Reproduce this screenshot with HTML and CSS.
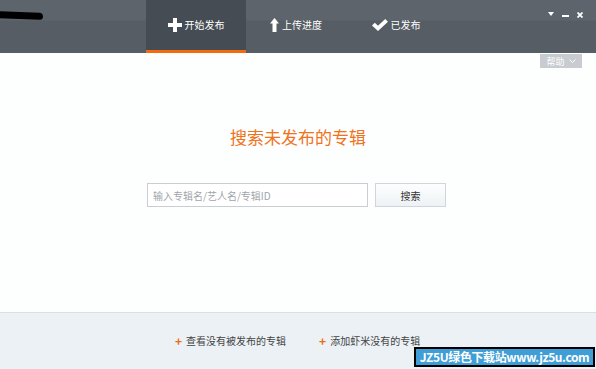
FILE: index.html
```html
<!DOCTYPE html>
<html>
<head>
	<title>发布专辑</title>
	<link rel="stylesheet" href="styles.css">
</head>
<body>
	<div class="app">
		<div class="header">
			<div class="logo"></div>
			<div class="tabs">
				<div class="tab is-active">
					<svg width="14" height="14" viewBox="0 0 14 14"><path d="M5 0h4v5h5v4H9v5H5V9H0V5h5z" fill="#fff"/></svg>
					<span>开始发布</span>
				</div>
				<div class="tab">
					<svg width="9" height="14" viewBox="0 0 9 14"><path d="M4.5 0L9 5.5H6.5V14h-4V5.5H0z" fill="#fff"/></svg>
					<span>上传进度</span>
				</div>
				<div class="tab">
					<svg width="16" height="12" viewBox="0 0 16 12"><path d="M0 6.5l2.8-2.8 3.2 3L13.2 0 16 2.8 6 12z" fill="#fff"/></svg>
					<span>已发布</span>
				</div>
			</div>
			<div class="controls">
				<svg class="ctl-menu" width="6" height="4" viewBox="0 0 6 4"><path d="M0 0h6L3 4z" fill="#fff"/></svg>
				<svg class="ctl-min" width="7" height="3" viewBox="0 0 7 3"><rect width="7" height="2" y="1" fill="#fff"/></svg>
				<svg class="ctl-close" width="6" height="6" viewBox="0 0 6 6"><path d="M0.5 0.5l5 5M5.5 0.5l-5 5" stroke="#fff" stroke-width="1.8"/></svg>
			</div>
		</div>

		<div class="main">
			<div class="helpbar">
				<div class="help">帮助 <svg width="7" height="5" viewBox="0 0 7 5"><path d="M0.5 0.5L3.5 3.5L6.5 0.5" stroke="#fff" fill="none"/></svg></div>
			</div>
			<h1 class="title">搜索未发布的专辑</h1>
			<form class="search">
				<input type="text" placeholder="输入专辑名/艺人名/专辑ID">
				<button type="button">搜索</button>
			</form>
		</div>

		<div class="footer">
			<a class="link"><span class="plus">+</span>查看没有被发布的专辑</a>
			<a class="link"><span class="plus">+</span>添加虾米没有的专辑</a>
			<div class="mark">JZ5U绿色下载站www.jz5u.com</div>
		</div>
	</div>
</body>
</html>
```

FILE: styles.css
```css
body {
	margin: 0;
	font-family: "Noto Sans CJK SC", "Liberation Sans", sans-serif;
	font-size: 10px;
	background: #fff;
}

.app {
	width: 596px;
	height: 369px;
	display: flex;
	flex-direction: column;
	overflow: hidden;
}

.header {
	height: 53px;
	flex: none;
	background: linear-gradient(#5d646b 0, #5d646b 20px, #565d64 21px, #565d64 100%);
	display: flex;
	position: relative;
}

.logo {
	position: absolute;
	left: -2px;
	top: 12px;
	width: 45px;
	height: 7px;
	background: #000;
	border-radius: 0 5px 4px 0;
	transform: rotate(2deg);
}

.tabs {
	display: flex;
	margin-left: 146px;
}

.tab {
	width: 100px;
	height: 50px;
	display: flex;
	align-items: center;
	justify-content: center;
	gap: 3px;
	color: #fff;
	font-size: 10px;
	border-bottom: 3px solid transparent;
}

.tab span {
	line-height: 1;
}

.tab.is-active {
	background: #464c53;
	border-bottom-color: #f26b0f;
}

.controls {
	margin-left: auto;
	margin-right: 13px;
	margin-top: 12px;
	display: flex;
	align-items: flex-start;
	height: 6px;
}

.ctl-min {
	margin-left: 8px;
	margin-top: 2px;
}

.ctl-close {
	margin-left: 8px;
}

.main {
	flex: 1;
	background: #fdfefe;
	display: flex;
	flex-direction: column;
	align-items: center;
}

.helpbar {
	align-self: stretch;
	display: flex;
	justify-content: flex-end;
	padding-right: 14px;
	padding-top: 1px;
}

.help {
	background: #c8ccd0;
	color: #fff;
	font-size: 9px;
	height: 14px;
	width: 42px;
	display: flex;
	align-items: center;
	justify-content: center;
	gap: 4px;
}

.title {
	margin: 57px 0 0;
	font-size: 17px;
	font-weight: normal;
	color: #f0731c;
	line-height: 24px;
}

.search {
	margin-top: 34px;
	margin-right: 3px;
	display: flex;
	gap: 7px;
}

.search input {
	width: 221px;
	height: 24px;
	box-sizing: border-box;
	border: 1px solid #c9ced3;
	padding: 0 5px;
	font-family: inherit;
	font-size: 10px;
	color: #333;
	background: #fff;
}

.search input::placeholder {
	color: #a0a5aa;
}

.search button {
	width: 71px;
	height: 24px;
	border: 1px solid #cfd5da;
	background: linear-gradient(#fdfefe, #eef2f5);
	font-family: inherit;
	font-size: 10px;
	color: #333;
	padding: 0;
}

.footer {
	height: 56px;
	flex: none;
	background: #ebf1f4;
	border-top: 1px solid #dcdfe1;
	display: flex;
	align-items: center;
	padding-left: 175px;
	gap: 33px;
	position: relative;
}

.link {
	color: #444;
	font-size: 10px;
	display: flex;
	align-items: center;
	gap: 4px;
	margin-top: -1px;
}

.plus {
	color: #f06c12;
	font-weight: bold;
	font-size: 12px;
}

.mark {
	position: absolute;
	right: 1px;
	bottom: 2px;
	width: 181px;
	height: 20px;
	box-sizing: border-box;
	background: #3f9ed5;
	border: 2px solid #000;
	color: #fff;
	font-weight: bold;
	font-size: 12px;
	letter-spacing: -0.4px;
	line-height: 16px;
	text-align: center;
	white-space: nowrap;
	overflow: hidden;
}
```
